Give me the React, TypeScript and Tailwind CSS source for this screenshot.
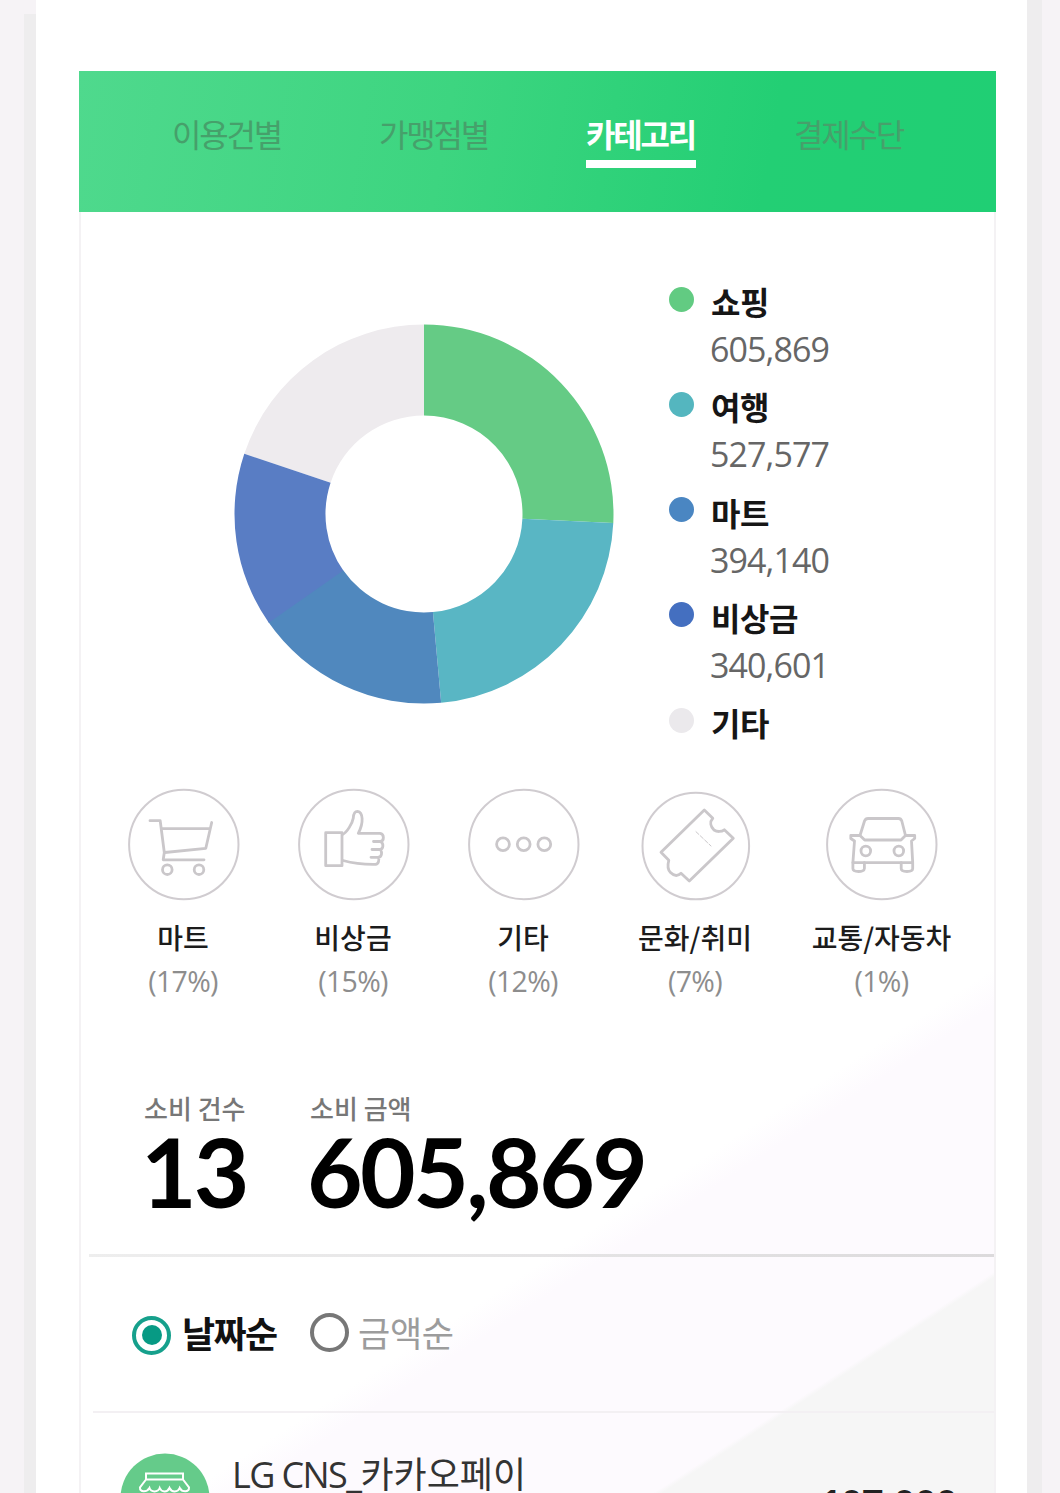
import type { ReactNode } from "react";
import clsx from "clsx";

const tabs = ["이용건별", "가맹점별", "카테고리", "결제수단"];
const activeTab = "카테고리";

const legend = [
  { name: "쇼핑", amount: "605,869", dot: "bg-[#62cb82]" },
  { name: "여행", amount: "527,577", dot: "bg-[#54b6bf]" },
  { name: "마트", amount: "394,140", dot: "bg-[#4a86c2]" },
  { name: "비상금", amount: "340,601", dot: "bg-[#446fc0]" },
  { name: "기타", amount: "", dot: "bg-[#ebe9ec]" },
];

// start and end in degrees, clockwise from the top
const slices = [
  { start: 288.5, end: 360, color: "#eeebee" },
  { start: 0, end: 92.7, color: "#65cb85" },
  { start: 92.7, end: 174.8, color: "#59b6c4" },
  { start: 174.8, end: 235.5, color: "#5088be" },
  { start: 235, end: 288.5, color: "#597dc4" },
];

function slicePath(start: number, end: number) {
  const outer = 189.5;
  const inner = 98.5;
  const point = (r: number, deg: number) => {
    const rad = (deg * Math.PI) / 180;
    return `${190 + r * Math.sin(rad)} ${190 - r * Math.cos(rad)}`;
  };
  return `M${point(outer, start)} A${outer} ${outer} 0 0 1 ${point(outer, end)} L${point(inner, end)} A${inner} ${inner} 0 0 0 ${point(inner, start)}Z`;
}

function CircleIcon({ r = 54.7, cy = 55.5, children }: { r?: number; cy?: number; children: ReactNode }) {
  return (
    <svg
      className="size-[111px] overflow-visible"
      viewBox="0 0 111 111"
      fill="none"
      stroke="#cac7ca"
      strokeWidth="2.8"
      strokeLinejoin="round"
      strokeLinecap="round"
    >
      <circle cx="55.8" cy={cy} r={r} strokeWidth="2" stroke="#d0ccd0" />
      {children}
    </svg>
  );
}

function CartIcon() {
  return (
    <CircleIcon>
      <path d="M22 31.7H32.2L36.3 63.5L35.2 70.8H76M33.2 39.6H81.5M83.7 33.5L77.8 59.3L36.8 63.5" />
      <circle cx="39.3" cy="80.7" r="4.8" />
      <circle cx="71" cy="80.7" r="4.8" />
    </CircleIcon>
  );
}

function ThumbIcon() {
  return (
    <CircleIcon>
      <path d="M27.7 43.7H44V76.7H27.7Z" />
      <path d="M44.5 45.5C49 43.5 54.5 34 55.3 29C55.5 25 56 22.3 59.5 22.3C65 23 66 33.5 60.3 44.3H82C86.5 45 86.3 52 82.5 52.5H75.5M82.5 52.5C86 54.5 85.5 60 82 60.5H74M82 60.5C84.5 62.5 84 68 80.5 68.3H73M80.5 68.3C81.5 71 80.5 75 77.5 75.3C66 75.5 56 74.5 45 71.5" />
    </CircleIcon>
  );
}

function MoreIcon() {
  return (
    <CircleIcon>
      <circle cx="35" cy="55.3" r="6.4" />
      <circle cx="55.7" cy="55.3" r="6.4" />
      <circle cx="76.3" cy="55.3" r="6.4" />
    </CircleIcon>
  );
}

function TicketIcon() {
  return (
    <CircleIcon r={53.3} cy={57}>
      <path d="M64.3 21L72.8 29.3C69.5 33 70.5 37.5 74 41C77 43 81.5 43 84.3 40.8L93.3 49.3L49.3 92L41 84.2C37.5 87.5 34 87 30.5 83.5C27 80 27.5 76 28.8 71.3L21 63.3Z" />
      <path d="M56 42.7L71 57" strokeWidth="1" strokeDasharray="4 2" />
    </CircleIcon>
  );
}

function CarIcon() {
  return (
    <CircleIcon>
      <path d="M42 29.5H72.5C74.3 29.5 75.2 30.3 75.8 32L79.5 46.5L75 51H38.7L34 46.5L38.5 32C39.2 30.3 40.2 29.5 42 29.5Z" />
      <path d="M34 46.5H24.8V49.5L28.5 52L26.9 73.7H86.7L85.5 52L88.7 49.5V46.5H79.5" />
      <path d="M26.9 73.7V79.5C26.9 83.5 38.4 83.5 38.4 79.5V73.7M75.2 73.7V79.5C75.2 83.5 86.7 83.5 86.7 79.5V73.7" />
      <circle cx="39.8" cy="62" r="4.8" />
      <circle cx="72.8" cy="62" r="4.8" />
    </CircleIcon>
  );
}

function StoreIcon() {
  return (
    <svg className="size-[90px] shrink-0" viewBox="0 0 90 90" fill="none" stroke="#fff" strokeWidth="2">
      <circle cx="45" cy="45" r="44.5" fill="#65cb8a" stroke="none" />
      <path d="M26 20.5H63V26.5H26ZM26 26.5L20 34.5C19.5 39.5 27 39.5 29.5 35C31 39.5 38 39.5 39.7 35C41.5 39.5 47.5 39.5 49.5 35C51.5 39.5 58 39.5 59.7 35C62 39.5 69.5 39.5 69 34.5L63 26.5" />
      <path d="M24 40V66H65V40" />
    </svg>
  );
}

const categories = [
  { name: "마트", percent: "(17%)", icon: <CartIcon />, width: "w-[170px]" },
  { name: "비상금", percent: "(15%)", icon: <ThumbIcon />, width: "w-[170px]" },
  { name: "기타", percent: "(12%)", icon: <MoreIcon />, width: "w-[170px]" },
  { name: "문화/취미", percent: "(7%)", icon: <TicketIcon />, width: "w-[174px]" },
  { name: "교통/자동차", percent: "(1%)", icon: <CarIcon />, width: "w-[199px]" },
];

export default function App() {
  return (
    <div className="flex h-[1493px] w-[1060px] overflow-hidden bg-[#f6f3f6] font-['Noto_Sans_CJK_KR',sans-serif]">
      <div className="mt-[14px] ml-6 w-3 bg-[#eeedee]" />
      <div className="w-[991px] bg-white pt-[71px] pl-[43px]">
        <div className="flex h-[1422px] w-[917px] flex-col">
          {/* Tabs */}
          <div className="flex h-[141px] shrink-0 gap-[98px] bg-linear-[100deg,#4fd98d,#3dd580_40%,#23cf74_75%,#20cf74] pt-[42px] pl-[93px]">
            {tabs.map((tab) => (
              <div
                key={tab}
                className={clsx(
                  "h-[55px] w-[110px] text-[32px] leading-[40px] tracking-[-2.2px] whitespace-nowrap",
                  tab === activeTab ? "border-b-[8px] border-white font-bold text-white" : "mr-[-1px] text-[#46a06b]"
                )}
              >
                {tab}
              </div>
            ))}
          </div>

          <div className="flex grow flex-col border-x-2 border-[#f4f2f4] bg-linear-[147deg,#fff_72%,#fdfafe_74%,#fdfafe_88.2%,#f6f6f6_88.5%]">
            {/* Chart and legend */}
            <div className="flex h-[577px] shrink-0">
              <svg className="mt-[112px] ml-[153px] size-[380px] shrink-0" viewBox="0 0 380 380">
                {slices.map((slice) => (
                  <path key={slice.color} d={slicePath(slice.start, slice.end)} fill={slice.color} />
                ))}
              </svg>
              <ul className="mt-[67px] ml-[55px]">
                {legend.map((item) => (
                  <li key={item.name} className="flex h-[105.3px] gap-[17px]">
                    <span className={clsx("mt-[7.5px] size-[25px] rounded-full", item.dot)} />
                    <div>
                      <p className="text-[32px] leading-[45px] font-bold tracking-[-0.4px] text-[#161616]">{item.name}</p>
                      <p className="ml-[-1px] font-['Open_Sans'] text-[34px] leading-[50px] tracking-[-0.9px] text-[#666]">
                        {item.amount}
                      </p>
                    </div>
                  </li>
                ))}
              </ul>
            </div>

            {/* Categories */}
            <div className="flex h-[300px] shrink-0 pl-[17px]">
              {categories.map((category) => (
                <div key={category.name} className={clsx("flex shrink-0 flex-col items-center", category.width)}>
                  {category.icon}
                  <p className="mt-[15px] text-[28px] leading-[44px] font-medium text-[#1c1c1c]">{category.name}</p>
                  <p className="mt-[2px] font-['Open_Sans'] text-[28.5px] leading-[40px] tracking-[-0.7px] text-[#8d8d8d]">
                    {category.percent}
                  </p>
                </div>
              ))}
            </div>

            {/* Totals */}
            <div className="flex h-[165px] shrink-0 pl-[63px]">
              <div className="w-[166px]">
                <p className="text-[26px] leading-[38px] font-medium text-[#777]">소비 건수</p>
                <p className="ml-[-3px] font-['Lato'] text-[96px] leading-[87px] font-bold tracking-[-3px] text-black">13</p>
              </div>
              <div>
                <p className="text-[26px] leading-[38px] font-medium text-[#777]">소비 금액</p>
                <p className="ml-[-3px] font-['Lato'] text-[96px] leading-[87px] font-bold tracking-[-2.6px] text-black">
                  605,869
                </p>
              </div>
            </div>
            <div className="ml-2 h-[3px] shrink-0 bg-linear-to-r from-[#eee] to-[#dcdadc]" />

            {/* Sort order */}
            <div className="flex h-[154px] shrink-0 items-center pl-[51px]">
              <span className="mt-[2px] flex size-[39px] items-center justify-center rounded-full border-4 border-[#16a08c]">
                <span className="size-5 rounded-full bg-[#079a84]" />
              </span>
              <span className="mt-[-5px] ml-[11px] w-[128px] text-[36px] leading-[46px] font-bold tracking-[-1.6px] text-[#111]">
                날짜순
              </span>
              <span className="mt-[-4px] size-[39px] rounded-full border-4 border-[#777]" />
              <span className="mt-[-5px] ml-[9px] text-[35px] leading-[46px] tracking-[-0.3px] text-[#9c9c9c]">금액순</span>
            </div>
            <div className="ml-3 h-[2px] shrink-0 bg-[#f3f0f3]" />

            {/* Transactions */}
            <div className="flex h-[80px] shrink-0 pt-[40px] pl-[39px]">
              <StoreIcon />
              <p className="mt-[-2px] ml-[22px] w-[588px] text-[36px] leading-[42px] text-[#333]">
                <span className="font-['Open_Sans'] tracking-[-1.6px]">LG CNS_</span>
                카카오페이
              </p>
              <p className="mt-[25px] font-['Open_Sans'] text-[37px] leading-[50px] font-bold text-[#222]">107,000</p>
            </div>
          </div>
        </div>
      </div>
      <div className="w-[15px] bg-[#eeedee]" />
    </div>
  );
}
